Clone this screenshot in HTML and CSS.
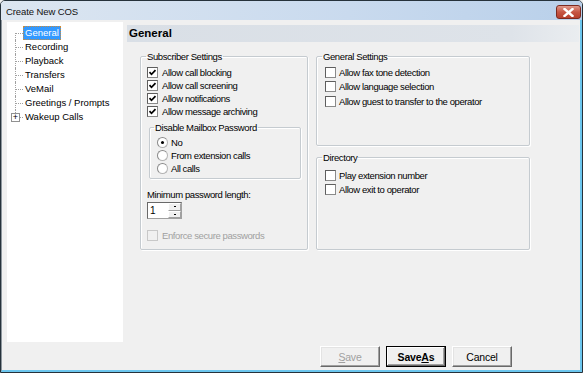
FILE: index.html
```html
<!DOCTYPE html>
<html>
<head>
  <title>Create New COS</title>
  <meta charset="UTF-8">
  <link rel="stylesheet" href="styles.css">
</head>
<body>
  <div class="window">
    <div class="titlebar">
      <span class="title">Create New COS</span>
      <button class="close" title="Close">
        <svg width="11" height="9" viewBox="0 0 11 9"><path d="M1.5 1l8 7M9.5 1l-8 7" stroke="#fff" stroke-width="2.4" stroke-linecap="square"/></svg>
      </button>
    </div>

    <div class="client">
      <div class="body-row">
        <ul class="tree">
          <li><span class="label selected">General</span></li>
          <li><span class="label">Recording</span></li>
          <li><span class="label">Playback</span></li>
          <li><span class="label">Transfers</span></li>
          <li><span class="label">VeMail</span></li>
          <li><span class="label">Greetings / Prompts</span></li>
          <li><span class="expander">+</span><span class="label">Wakeup Calls</span></li>
        </ul>

        <div class="page">
          <div class="page-head">General</div>

          <div class="groups">
            <fieldset class="group subscriber">
              <legend>Subscriber Settings</legend>
              <label class="row"><span class="box checked"></span>Allow call blocking</label>
              <label class="row"><span class="box checked"></span>Allow call screening</label>
              <label class="row"><span class="box checked"></span>Allow notifications</label>
              <label class="row"><span class="box checked"></span>Allow message archiving</label>

              <fieldset class="group inner">
                <legend>Disable Mailbox Password</legend>
                <label class="row radio-row"><span class="radio on"></span>No</label>
                <label class="row radio-row"><span class="radio"></span>From extension calls</label>
                <label class="row radio-row"><span class="radio"></span>All calls</label>
              </fieldset>

              <div class="row min-len">Minimum password length:</div>
              <div class="spin">
                <span class="spin-value">1</span>
                <span class="spin-buttons">
                  <span class="spin-btn"><i></i></span>
                  <span class="spin-btn"><i></i></span>
                </span>
              </div>

              <label class="row disabled enforce"><span class="box"></span>Enforce secure passwords</label>
            </fieldset>

            <div class="right-col">
              <fieldset class="group general">
                <legend>General Settings</legend>
                <label class="row"><span class="box"></span>Allow fax tone detection</label>
                <label class="row"><span class="box"></span>Allow language selection</label>
                <label class="row"><span class="box"></span>Allow guest to transfer to the operator</label>
              </fieldset>

              <fieldset class="group directory">
                <legend>Directory</legend>
                <label class="row"><span class="box"></span>Play extension number</label>
                <label class="row"><span class="box"></span>Allow exit to operator</label>
              </fieldset>
            </div>
          </div>
        </div>
      </div>

      <div class="footer">
        <button class="btn" disabled><u>S</u>ave</button>
        <button class="btn default">Save<u>A</u>s</button>
        <button class="btn">Cancel</button>
      </div>
    </div>
  </div>
</body>
</html>
```

FILE: styles.css
```css
* {
  box-sizing: border-box;
}
body {
  margin: 0;
  background: #f0f0f0;
  font-family: "Liberation Sans", Arial, sans-serif;
  font-size: 9.5px;
  letter-spacing: -0.4px;
  color: #000;
}
.window {
  width: 583px;
  height: 373px;
  border: 1px solid #26323b;
  border-radius: 5px 5px 0 0;
  display: flex;
  flex-direction: column;
  overflow: hidden;
}
.titlebar {
  height: 19px;
  flex: none;
  display: flex;
  align-items: center;
  justify-content: space-between;
  padding: 0 1px 0 5px;
  background: linear-gradient(to right, #dce6f1, #c9daee 60%, #b9d0ea);
}
.title {
  font-size: 9.5px;
  letter-spacing: -0.1px;
  color: #111;
  padding-top: 1px;
}
.close {
  width: 25px;
  height: 14px;
  margin-top: 3px;
  padding: 0;
  border: 1px solid #7d2a20;
  border-radius: 3px;
  background: linear-gradient(#e09a8c, #c75644 50%, #b8402e);
  display: flex;
  align-items: center;
  justify-content: center;
}
.client {
  flex: 1;
  display: flex;
  flex-direction: column;
  background: #f0f0f0;
  border-left: 1px solid #8e979e;
  border-right: 2px solid #6cc6ee;
  border-bottom: 2px solid #6cc6ee;
  padding: 2px 0 0 5px;
}
.body-row {
  display: flex;
  gap: 4px;
  height: 320px;
}

/* tree */
.tree {
  list-style: none;
  margin: 0;
  padding: 4px 0 0;
  width: 116px;
  flex: none;
  background: #fff;
  letter-spacing: 0;
}
.tree li {
  position: relative;
  height: 14px;
  padding-left: 16px;
  display: flex;
  align-items: center;
  white-space: nowrap;
}
.tree li::before {
  content: "";
  position: absolute;
  left: 8px;
  top: 0;
  bottom: 0;
  border-left: 1px dotted #a0a0a0;
}
.tree li:first-child::before {
  top: 7px;
}
.tree li:last-child::before {
  bottom: 7px;
}
.tree li::after {
  content: "";
  position: absolute;
  left: 9px;
  top: 7px;
  width: 7px;
  border-top: 1px dotted #a0a0a0;
}
.tree .label {
  padding: 0 1px;
  line-height: 12px;
  border: 1px solid transparent;
}
.tree .label.selected {
  background: #3399ff;
  color: #fff;
  border: 1px dotted #c98b3c;
}
.expander {
  position: absolute;
  left: 4px;
  top: 3px;
  width: 9px;
  height: 9px;
  border: 1px solid #919191;
  background: #fff;
  font-size: 9px;
  line-height: 7px;
  text-align: center;
  color: #000;
  z-index: 1;
}

/* right page */
.page {
  flex: 1;
  margin-top: 3px;
  padding-right: 1px;
}
.page-head {
  height: 17px;
  padding-left: 2px;
  font-size: 11.5px;
  letter-spacing: 0;
  font-weight: bold;
  line-height: 17px;
  background: linear-gradient(to right, #d9dfe6, #dee3e9 85%, #eaedf0);
}
.groups {
  display: grid;
  grid-template-columns: 168px 214px;
  column-gap: 8px;
  margin: 8px 0 0 13px;
}
.group {
  margin: 0;
  border: 1px solid #c5cbd0;
  border-radius: 2px;
  box-shadow: inset 1px 1px #fff, 1px 1px #fff;
  min-width: 0;
}
.group legend {
  padding: 0 1px;
  margin-left: -3px;
  line-height: 13px;
}
.subscriber {
  height: 200px;
  padding: 3px 6px 0;
}
.subscriber > legend {
  margin-left: -1px;
}
.row {
  display: flex;
  align-items: center;
  height: 13px;
  white-space: nowrap;
}
.box {
  width: 11px;
  height: 11px;
  flex: none;
  margin-right: 4px;
  background: #fff;
  border: 1px solid #8a8a8a;
  border-top-color: #5e5e5e;
  border-left-color: #5e5e5e;
}
.box.checked {
  background: #fff url("data:image/svg+xml;utf8,<svg xmlns='http://www.w3.org/2000/svg' width='9' height='9' viewBox='0 0 9 9'><path d='M1.5 4.2l2 2.1 4-4.2' fill='none' stroke='black' stroke-width='1.7'/></svg>") no-repeat center;
}
.inner {
  margin: 3px 0 0 2px;
  padding: 2px 7px 3px;
}
.radio {
  width: 11px;
  height: 11px;
  flex: none;
  margin-right: 3px;
  border-radius: 50%;
  background: #fff;
  border: 1px solid #b4b4b4;
  border-top-color: #8a8a8a;
  border-left-color: #8a8a8a;
  display: flex;
  align-items: center;
  justify-content: center;
}
.radio.on::after {
  content: "";
  width: 3px;
  height: 3px;
  border-radius: 50%;
  background: #000;
}
.min-len {
  margin-top: 9px;
}
.spin {
  display: flex;
  width: 35px;
  height: 17px;
  margin-top: 1px;
  background: #fff;
  border: 1px solid #a0a0a0;
  border-top-color: #696969;
  border-left-color: #696969;
}
.spin-value {
  flex: 1;
  padding-left: 2px;
  line-height: 15px;
  font-size: 10px;
}
.spin-buttons {
  display: flex;
  flex-direction: column;
  width: 13px;
}
.spin-btn {
  flex: 1;
  background: #f0f0f0;
  border: 1px solid #a0a0a0;
  border-top-color: #fff;
  border-left-color: #fff;
  display: flex;
  align-items: center;
  justify-content: center;
}
.spin-btn i {
  width: 2px;
  height: 1px;
  background: #000;
}
.enforce {
  margin-top: 10px;
}
.disabled {
  color: #a0a0a0;
}
.disabled .box {
  background: #f0f0f0;
  border-color: #c8c8c8;
}
.right-col {
  display: flex;
  flex-direction: column;
  gap: 5px;
}
.general {
  height: 96px;
  padding: 2px 8px 0;
}
.directory {
  height: 99px;
  padding: 4px 8px 0;
}
.general .row,
.directory .row {
  height: 14.5px;
}
.general .box,
.directory .box {
  margin-right: 3px;
}

/* buttons */
.footer {
  display: flex;
  justify-content: flex-end;
  gap: 6px;
  margin-top: 4px;
  padding-right: 68px;
}
.btn {
  width: 60px;
  height: 21px;
  padding: 0;
  font: inherit;
  font-size: 10.5px;
  letter-spacing: -0.2px;
  color: #000;
  background: #f0f0f0;
  border: 1px solid;
  border-color: #fff #696969 #696969 #fff;
  box-shadow: inset -1px -1px #a0a0a0, inset 1px 1px #e3e3e3;
}
.btn:disabled {
  color: #a0a0a0;
}
.btn.default {
  font-weight: bold;
  border: 1px solid #000;
  box-shadow: inset -1px -1px #696969, inset 1px 1px #fff, inset -2px -2px #a0a0a0;
}
```
